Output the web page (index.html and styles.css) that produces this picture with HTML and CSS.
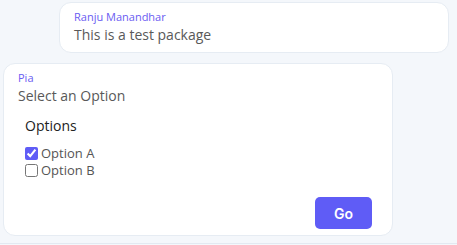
FILE: index.html
```html
<!DOCTYPE html>
<html>
<head>
<meta charset="utf-8">
<link rel="stylesheet" href="styles.css">
</head>
<body>
<div class="chat">
  <div class="msg msg-right">
    <div class="sender">Ranju Manandhar</div>
    <div class="text">This is a test package</div>
  </div>
  <div class="msg msg-left">
    <div class="sender">Pia</div>
    <div class="text">Select an Option</div>
    <div class="form">
      <div class="form-title">Options</div>
      <label class="opt"><input type="checkbox" checked> Option A</label>
      <label class="opt"><input type="checkbox"> Option B</label>
      <div class="actions"><button class="go">Go</button></div>
    </div>
  </div>
</div>
<div class="footer"></div>
</body>
</html>
```
FILE: styles.css
```css
html, body {
  margin: 0;
  padding: 0;
  height: 100%;
}
body {
  background: #f4f7fb;
  font-family: "Open Sans", "Liberation Sans", sans-serif;
  overflow: hidden;
  display: flex;
  flex-direction: column;
}
.chat {
  display: flex;
  flex-direction: column;
  gap: 10px;
  padding-top: 2px;
  height: 241px;
}
.msg {
  background: #fff;
  border: 1px solid #e6ecf3;
  border-radius: 12px;
  box-sizing: content-box;
}
.msg-right {
  margin-left: 59px;
  padding: 6px 0 7px 14px;
  width: 374px;
}
.msg-left {
  margin-left: 3px;
  padding: 6px 0 6px 14px;
  width: 374px;
  height: 159px;
}
.sender {
  font-size: 11px;
  color: #6a5cf2;
  line-height: 16px;
  font-weight: 500;
}
.text {
  font-size: 14px;
  color: #595959;
  line-height: 20px;
}
.form {
  padding: 10px 20px 0 7px;
}
.form-title {
  font-size: 14px;
  color: #222;
  line-height: 20px;
  margin-bottom: 9px;
}
.opt {
  display: flex;
  align-items: center;
  font-size: 13px;
  color: #555;
  line-height: 17px;
  gap: 3px;
}
.opt input {
  margin: 0;
  width: 13px;
  height: 13px;
  accent-color: #5f5cf6;
}
.actions {
  display: flex;
  justify-content: flex-end;
  margin-top: 18px;
}
.go {
  width: 57px;
  height: 32px;
  border: none;
  border-radius: 5px;
  background: #5f5cf6;
  color: #fff;
  font-family: "Inter", "Liberation Sans", sans-serif;
  font-weight: 600;
  font-size: 14px;
}
.footer {
  border-top: 1px solid #e3e9f1;
  flex: 1;
  background: #f4f7fb;
}
```
